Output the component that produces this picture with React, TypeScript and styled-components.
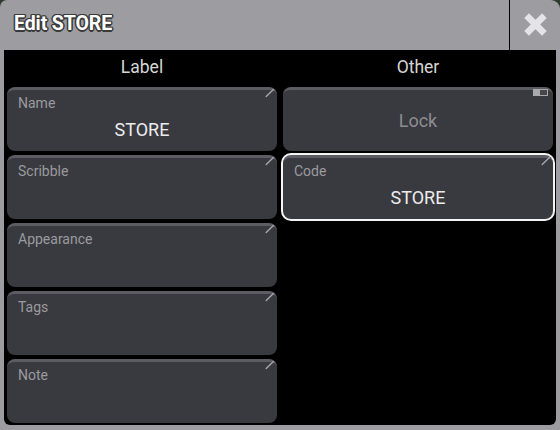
import React from "react";
import styled, { createGlobalStyle } from "styled-components";

const Global = createGlobalStyle`
  html, body { margin: 0; padding: 0; background: #2e3b2e; }
  body { font-family: Roboto, "Liberation Sans", Arial, sans-serif; }
  * { box-sizing: border-box; }
`;

const Window = styled.div`
  width: 560px;
  height: 430px;
  background: #9d9da1;
  border-radius: 7px 9px 0 0;
  display: flex;
  flex-direction: column;
  overflow: hidden;
`;

const TitleBar = styled.div`
  height: 50px;
  display: flex;
  flex-shrink: 0;
`;

const Title = styled.div`
  flex: 1;
  display: flex;
  align-items: center;
  padding: 0 0 3px 14px;
  font-size: 19.5px;
  font-weight: 700;
  color: #ffffff;
  letter-spacing: -0.1px;
  text-shadow: -1px -1px 0 #3a3a3a, 1px -1px 0 #3a3a3a, -1px 1px 0 #3a3a3a,
    1px 1px 0 #3a3a3a, 0 -1.5px 0 #3a3a3a, 0 1.5px 0 #3a3a3a,
    -1.5px 0 0 #3a3a3a, 1.5px 0 0 #3a3a3a;
`;

const CloseButton = styled.div`
  width: 51px;
  border-left: 1px solid #000;
  display: flex;
  align-items: center;
  justify-content: center;
  padding-bottom: 1px;
`;

const Content = styled.div`
  flex: 1;
  margin: 0 4px 5px 4px;
  background: #000;
  border-radius: 0 0 6px 6px;
  display: grid;
  grid-template-columns: 1fr 1fr;
  column-gap: 6px;
  padding: 0 3px;
`;

const Column = styled.div`
  display: flex;
  flex-direction: column;
  gap: 4px;
`;

const Header = styled.div`
  height: 33px;
  line-height: 35px;
  text-align: center;
  font-size: 17.5px;
  color: #d6d6d6;
`;

const Button = styled.div<{ $selected?: boolean; $center?: boolean }>`
  position: relative;
  height: 64px;
  background: #393940;
  border-top: 3px solid #5c5c62;
  border-radius: 8px;
  padding: 5px 11px 0;
  display: flex;
  flex-direction: column;
  justify-content: ${(p) => (p.$center ? "center" : "flex-start")};
  box-shadow: ${(p) => (p.$selected ? "0 0 0 2px #f4f4f4" : "none")};
`;

const FieldLabel = styled.div`
  font-size: 14px;
  line-height: 16px;
  color: #9b9b9e;
`;

const Value = styled.div`
  margin-top: 8px;
  font-size: 18px;
  line-height: 22px;
  text-align: center;
  color: #ececec;
`;

const Disabled = styled.div`
  font-size: 18px;
  line-height: 22px;
  text-align: center;
  color: #8d8d90;
  margin-top: -4px;
`;

const Pen = styled.svg`
  position: absolute;
  top: -2px;
  right: 2px;
`;

const Toggle = styled.div`
  position: absolute;
  top: -1px;
  right: 5px;
  width: 15px;
  height: 7px;
  background: #a9a9ad;
  padding: 1px;
  display: flex;
  justify-content: flex-end;
`;

const ToggleKnob = styled.div`
  width: 7px;
  height: 5px;
  background: #46464c;
`;

const PenMark = () => (
  <Pen width="10" height="10" viewBox="0 0 10 10">
    <path d="M1.2 8.6 L8.4 1.4" stroke="#a6a6aa" strokeWidth="1.4" strokeLinecap="round" />
  </Pen>
);

const Field: React.FC<{ label: string; value?: string; selected?: boolean }> = ({
  label,
  value,
  selected,
}) => (
  <Button $selected={selected}>
    <PenMark />
    <FieldLabel>{label}</FieldLabel>
    {value && <Value>{value}</Value>}
  </Button>
);

export default function App() {
  return (
    <>
      <Global />
      <Window>
        <TitleBar>
          <Title>Edit STORE</Title>
          <CloseButton>
            <svg width="23" height="23" viewBox="0 0 23 23">
              <path
                d="M2.6 2.6 L20.4 20.4 M20.4 2.6 L2.6 20.4"
                stroke="#e4e4e6"
                strokeWidth="6.6"
              />
            </svg>
          </CloseButton>
        </TitleBar>
        <Content>
          <Column>
            <Header>Label</Header>
            <Field label="Name" value="STORE" />
            <Field label="Scribble" />
            <Field label="Appearance" />
            <Field label="Tags" />
            <Field label="Note" />
          </Column>
          <Column>
            <Header>Other</Header>
            <Button $center>
              <Toggle>
                <ToggleKnob />
              </Toggle>
              <Disabled>Lock</Disabled>
            </Button>
            <Field label="Code" value="STORE" selected />
          </Column>
        </Content>
      </Window>
    </>
  );
}
